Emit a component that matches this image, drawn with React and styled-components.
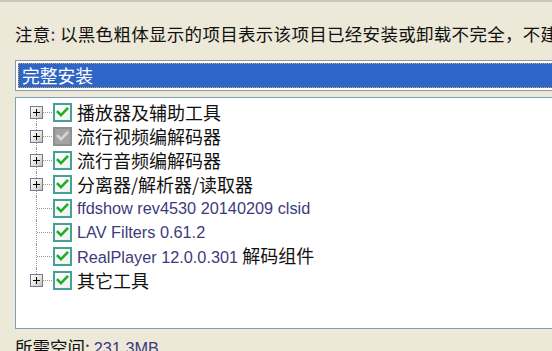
import React from "react";
import styled, { createGlobalStyle } from "styled-components";

const Global = createGlobalStyle`
  html, body { margin: 0; padding: 0; background: #ECE9D8; overflow: hidden; }
  body { width: 552px; height: 351px; }
`;

const CJK = `"Noto Sans CJK SC", "Noto Sans", sans-serif`;
const LATIN = `"Liberation Sans", "Noto Sans CJK SC", sans-serif`;

const Page = styled.div`
  width: 640px;
  height: 351px;
  box-sizing: border-box;
  border-top: 2px solid #c9c7bd;
  padding-left: 15px;
  font-family: ${CJK};
  color: #111;
`;

const Note = styled.div`
  margin-top: 22px;
  height: 20px;
  line-height: 20px;
  font-size: 17.5px;
  letter-spacing: 0.3px;
  white-space: nowrap;
`;

const Colon = styled.span`
  color: #5a2f6a;
`;

const Combo = styled.div`
  margin-top: 16px;
  height: 31px;
  box-sizing: border-box;
  border: 1px solid #7F9DB9;
  background: #fff;
  padding: 2px;
`;

const Selected = styled.div`
  height: 100%;
  box-sizing: border-box;
  background: #2F65C6;
  border: 1px dotted #d9a53a;
  color: #fff;
  font-size: 17.75px;
  line-height: 23px;
  padding-left: 3px;
`;

const Tree = styled.div`
  margin-top: 6px;
  height: 232px;
  box-sizing: border-box;
  border: 1px solid #7F9DB9;
  background: #fff;
  padding-top: 2px;
`;

const Row = styled.div`
  display: flex;
  align-items: center;
  height: 24px;
  padding-left: 14px;
`;

const Expander = styled.div`
  position: relative;
  width: 23px;
  height: 24px;
  flex: none;
  &::before {
    content: "";
    position: absolute;
    left: 6px;
    top: ${(p) => (p.$first ? "12px" : "0")};
    bottom: ${(p) => (p.$last ? "12px" : "0")};
    border-left: 1px dotted #9a9a9a;
  }
  &::after {
    content: "";
    position: absolute;
    left: 7px;
    right: 1px;
    top: 12px;
    border-top: 1px dotted #9a9a9a;
  }
`;

const PlusBox = styled.div`
  position: absolute;
  left: 0;
  top: 6px;
  width: 13px;
  height: 13px;
  box-sizing: border-box;
  border: 1px solid #6f7f92;
  background: linear-gradient(135deg, #ffffff 0%, #e6e4dc 55%, #c4c1b5 100%);
  z-index: 1;
  &::before {
    content: "";
    position: absolute;
    left: 2px;
    top: 5px;
    width: 7px;
    height: 1px;
    background: #000;
  }
  &::after {
    content: "";
    position: absolute;
    left: 5px;
    top: 2px;
    width: 1px;
    height: 7px;
    background: #000;
  }
`;

const Check = styled.div`
  width: 19px;
  height: 19px;
  flex: none;
  box-sizing: border-box;
  border: 2px solid ${(p) => (p.$disabled ? "#8f8f8f" : "#45a096")};
  background: ${(p) =>
    p.$disabled ? "#a3a3a3" : "linear-gradient(135deg, #ffffff, #eef1ee)"};
  display: flex;
  align-items: center;
  justify-content: center;
`;

const Label = styled.span`
  margin-left: 5px;
  font-size: ${(p) => (p.$latin ? "16.3px" : "18px")};
  font-family: ${(p) => (p.$latin ? LATIN : CJK)};
  color: ${(p) => (p.$latin ? "#3e3a7e" : "#111")};
  white-space: nowrap;
  line-height: 24px;
`;

const CjkPart = styled.span`
  font-family: ${CJK};
  font-size: 18px;
  color: #111;
`;

const Footer = styled.div`
  margin-top: 8px;
  font-size: 17.5px;
  line-height: 20px;
  white-space: nowrap;
`;

const FooterValue = styled.span`
  font-family: ${LATIN};
  font-size: 16.3px;
  color: #3e3a7e;
`;

const CheckMark = ({ disabled }) => (
  <svg width="13" height="13" viewBox="0 0 13 13">
    <path
      d="M1.8 6 L5 9.2 L11.2 2.8"
      fill="none"
      stroke={disabled ? "#d6d6d6" : "#1fae2a"}
      strokeWidth="2.6"
      strokeLinecap="square"
    />
  </svg>
);

const items = [
  { text: "播放器及辅助工具", expand: true },
  { text: "流行视频编解码器", expand: true, disabled: true },
  { text: "流行音频编解码器", expand: true },
  { text: "分离器/解析器/读取器", expand: true },
  { text: "ffdshow rev4530 20140209 clsid", latin: true },
  { text: "LAV Filters 0.61.2", latin: true },
  { text: "RealPlayer 12.0.0.301", latin: true, suffix: " 解码组件" },
  { text: "其它工具", expand: true },
];

export default function App() {
  return (
    <>
      <Global />
      <Page>
        <Note>
          注意<Colon>:</Colon> 以黑色粗体显示的项目表示该项目已经安装或卸载不完全，不建议更改
        </Note>
        <Combo>
          <Selected>完整安装</Selected>
        </Combo>
        <Tree>
          {items.map((it, i) => (
            <Row key={i}>
              <Expander $first={i === 0} $last={i === items.length - 1}>
                {it.expand && <PlusBox />}
              </Expander>
              <Check $disabled={it.disabled}>
                <CheckMark disabled={it.disabled} />
              </Check>
              <Label $latin={it.latin}>
                {it.text}
                {it.suffix && <CjkPart>{it.suffix}</CjkPart>}
              </Label>
            </Row>
          ))}
        </Tree>
        <Footer>
          所需空间<Colon>:</Colon> <FooterValue>231.3MB</FooterValue>
        </Footer>
      </Page>
    </>
  );
}
